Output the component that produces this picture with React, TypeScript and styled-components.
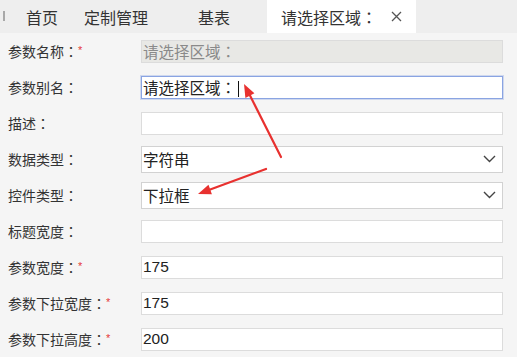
import styled, { createGlobalStyle } from "styled-components";

const GlobalStyle = createGlobalStyle`
  body {
    margin: 0;
    background: #f5f5f5;
    font-family: "Liberation Sans", "Noto Sans CJK SC", sans-serif;
    color: #333;
  }
`;

type Row = {
  label: string;
  required?: boolean;
  value?: string;
  kind?: "text" | "disabled" | "focused" | "select";
};

const rows: Row[] = [
  { label: "参数名称：", required: true, value: "请选择区域：", kind: "disabled" },
  { label: "参数别名：", value: "请选择区域：", kind: "focused" },
  { label: "描述：" },
  { label: "数据类型：", value: "字符串", kind: "select" },
  { label: "控件类型：", value: "下拉框", kind: "select" },
  { label: "标题宽度：" },
  { label: "参数宽度：", required: true, value: "175" },
  { label: "参数下拉宽度：", required: true, value: "175" },
  { label: "参数下拉高度：", required: true, value: "200" },
];

const Page = styled.div`
  position: relative;
  width: 517px;
  height: 357px;
  overflow: hidden;
`;

const TabBar = styled.div`
  display: flex;
  align-items: stretch;
  height: 33px;
  background: #eeeeee;
  padding-left: 3px;
`;

const Marker = styled.div`
  width: 2px;
  height: 10px;
  margin: 11px 8px 0 0;
  background: #a8a8a8;
`;

const Tab = styled.div<{ $w: number; $active?: boolean }>`
  width: ${({ $w }) => $w}px;
  display: flex;
  align-items: center;
  justify-content: center;
  gap: 14px;
  font-size: 16px;
  color: #333;
  background: ${({ $active }) => ($active ? "#ffffff" : "transparent")};
`;

const Form = styled.div`
  display: flex;
  flex-direction: column;
`;

const FormRow = styled.div`
  display: flex;
  align-items: center;
  height: 36px;
`;

const Label = styled.div`
  width: 133px;
  padding-left: 8px;
  font-size: 14px;
  color: #333;
  white-space: nowrap;
`;

// full-width colon drawn centred in its box, as the original UI font does
const Colon = styled.span`
  font-family: "Noto Sans CJK TC", sans-serif;
`;

const Star = styled.span`
  color: #e5393a;
  font-size: 11px;
  vertical-align: 3px;
`;

const Field = styled.div<{ $kind: string }>`
  box-sizing: border-box;
  width: 362px;
  height: ${({ $kind }) => ($kind === "select" ? 27 : 23)}px;
  display: flex;
  align-items: center;
  justify-content: space-between;
  padding: 0 6px 0 1px;
  font-size: 15.5px;
  color: ${({ $kind }) => ($kind === "disabled" ? "#8a8a8a" : "#222")};
  background: ${({ $kind }) => ($kind === "disabled" ? "#e8e8e5" : "#ffffff")};
  border: 1px solid
    ${({ $kind }) =>
      $kind === "focused" ? "#8aa4e2" : $kind === "select" ? "#d2d2d2" : "#dcdcdc"};
  box-shadow: ${({ $kind }) =>
    $kind === "focused" ? "0 0 0 1px rgba(138,164,226,0.35)" : "none"};
`;

const Caret = styled.span`
  display: inline-block;
  width: 1px;
  height: 16px;
  margin-left: 2px;
  background: #111;
  vertical-align: -3px;
`;

const Overlay = styled.svg`
  position: absolute;
  left: 0;
  top: 0;
  pointer-events: none;
`;

const withColon = (text: string) => {
  const parts = text.split("：");
  return parts.map((p, i) => (
    <span key={i}>
      {p}
      {i < parts.length - 1 && <Colon>：</Colon>}
    </span>
  ));
};

const CloseIcon = () => (
  <svg width="11" height="11" viewBox="0 0 11 11">
    <path d="M1 1 L10 10 M10 1 L1 10" stroke="#555" strokeWidth="1.3" />
  </svg>
);

const Chevron = () => (
  <svg width="13" height="8" viewBox="0 0 13 8">
    <path d="M1 1 L6.5 6.5 L12 1" stroke="#444" strokeWidth="1.4" fill="none" />
  </svg>
);

const App = () => {
  return (
    <Page>
      <GlobalStyle />
      <TabBar>
        <Marker />
        <Tab $w={58}>首页</Tab>
        <Tab $w={90}>定制管理</Tab>
        <Tab $w={106}>基表</Tab>
        <Tab $w={149} $active>
          <span>{withColon("请选择区域：")}</span>
          <CloseIcon />
        </Tab>
      </TabBar>
      <Form>
        {rows.map((row, i) => {
          const kind = row.kind ?? "text";
          return (
            <FormRow key={i}>
              <Label>
                {withColon(row.label)}
                {row.required && <Star>*</Star>}
              </Label>
              <Field $kind={kind}>
                <span>
                  {row.value && withColon(row.value)}
                  {kind === "focused" && <Caret />}
                </span>
                {kind === "select" && <Chevron />}
              </Field>
            </FormRow>
          );
        })}
      </Form>
      <Overlay width="517" height="357">
        <line x1="281" y1="157" x2="250" y2="95.6" stroke="#e8312f" strokeWidth="2.2" strokeLinecap="round" />
        <polygon points="244,84 254.4,93.3 245.4,97.9" fill="#e8312f" />
        <line x1="266" y1="169" x2="210.2" y2="189.5" stroke="#e8312f" strokeWidth="2.2" strokeLinecap="round" />
        <polygon points="198,194 208.5,184.8 211.9,194.2" fill="#e8312f" />
      </Overlay>
    </Page>
  );
};

export default App;
